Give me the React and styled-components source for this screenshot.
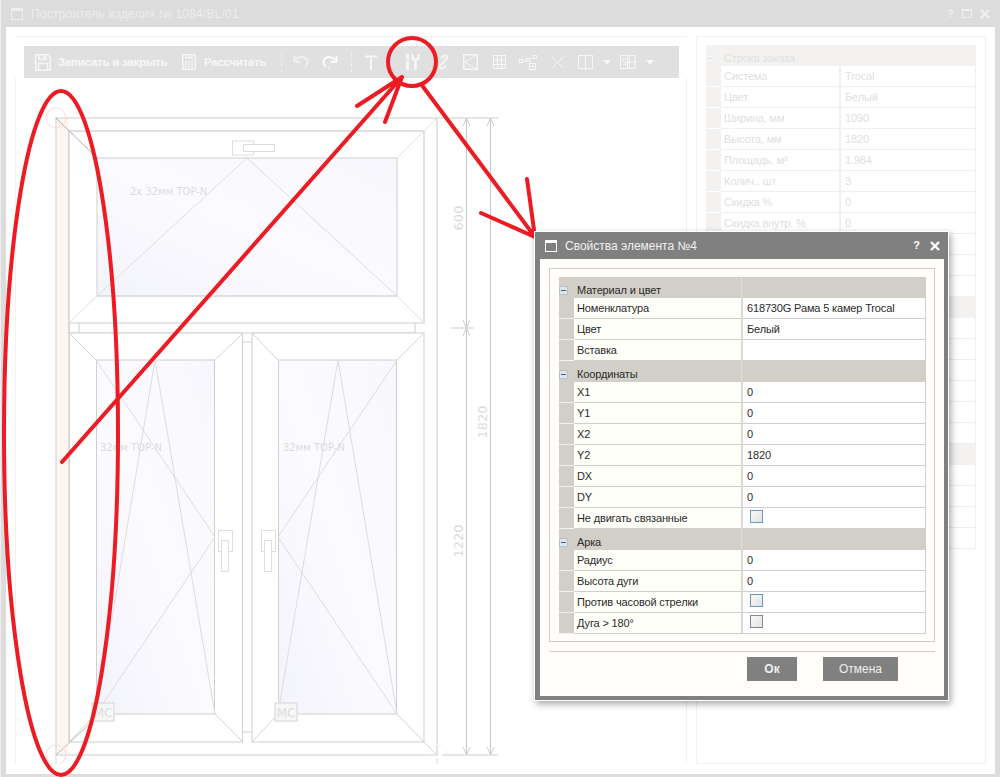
import React from "react";
import styled, { createGlobalStyle } from "styled-components";

const Global = createGlobalStyle`
  html, body { margin: 0; padding: 0; background: #fff; }
  * { box-sizing: border-box; }
  body { font-family: "Liberation Sans", Arial, sans-serif; font-size: 11px; }
`;

const Page = styled.div`
  position: relative;
  width: 1000px;
  height: 777px;
  overflow: hidden;
`;

const MainWindow = styled.div`
  width: 1000px;
  height: 777px;
  display: flex;
  flex-direction: column;
  background: #dcdcdc;
  padding: 0 5px 3px 5px;
  border-left: 1px solid #efefef;
`;

const MainTitle = styled.div`
  height: 27px;
  flex: none;
  display: flex;
  align-items: center;
  padding: 0 5px 0 5px;
  color: #ececec;
  font-size: 12px;
  letter-spacing: 0.2px;
`;

const TitleText = styled.span`
  margin-left: 8px;
  flex: 1;
`;

const WinButtons = styled.div`
  display: flex;
  align-items: center;
  gap: ${p => p.$gap}px;
`;

const Help = styled.span`
  font-weight: 700;
  font-size: 11px;
  color: ${p => p.$color};
  line-height: 1;
`;

const MainBody = styled.div`
  flex: 1;
  display: flex;
  gap: 9px;
  background: #fff;
  padding: 9px 9px 10px 9px;
`;

const DesignPane = styled.div`
  width: 672px;
  flex: none;
  display: flex;
  flex-direction: column;
  padding-top: 9px;
  border-top: 1px solid #f1f1ee;
`;

const Toolbar = styled.div`
  height: 32px;
  flex: none;
  margin: 0 8px 0 9px;
  display: flex;
  align-items: center;
  padding-left: 11px;
  background: #e0e0e0;
`;

const ToolText = styled.span`
  margin-left: ${p => p.$gap}px;
  width: ${p => p.$width}px;
  flex: none;
  color: #f7f7f7;
  font-size: 11.5px;
  font-weight: 700;
  white-space: nowrap;
  letter-spacing: -0.25px;
`;

const ToolSvg = styled.svg`
  flex: none;
  display: block;
  margin-left: ${p => p.$gap || 0}px;
  fill: none;
  stroke: #f6f6f6;
  stroke-width: 1.5;
`;

const ToolSep = styled.span`
  width: 1px;
  height: 20px;
  flex: none;
  margin-left: ${p => p.$gap}px;
  border-left: 1px dashed #efefef;
`;

const Canvas = styled.div`
  flex: 1;
  border-left: 1px solid #f1f1ee;
  border-right: 1px solid #f1f1ee;
`;

const Drawing = styled.svg`
  display: block;
  font-family: "DejaVu Sans", sans-serif;
`;

const OrderPane = styled.div`
  width: 290px;
  flex: none;
  padding: 8px 8px 0 9px;
  border: 1px solid #f1f1ee;
`;

const Grid = styled.div`
  width: ${p => p.$width}px;
  color: ${p => (p.$faded ? "#e0e0e0" : "#2b2b2b")};
  letter-spacing: -0.15px;
`;

const SectionRow = styled.div`
  height: 21px;
  display: grid;
  grid-template-columns: 15px ${p => p.$label}px 1fr;
  background: ${p => (p.$faded ? "#f3f2f0" : "#d2cfc8")};
`;

const Expander = styled.span`
  display: flex;
  align-items: center;
  justify-content: center;
  align-self: end;
  width: 9px;
  height: 9px;
  margin-bottom: 3px;
  background: ${p => (p.$faded ? "#f5f6f7" : "#dde6ec")};
  border: 1px solid ${p => (p.$faded ? "#eef0f1" : "#b4bfc6")};
  border-radius: 1px;
  &::after {
    content: "";
    width: 5px;
    height: 1px;
    background: ${p => (p.$faded ? "#dde" : "#53606a")};
  }
`;

const SectionCell = styled.span`
  padding: 6px 0 0 3px;
  line-height: 15px;
  white-space: nowrap;
  border-right: ${p => (p.$faded ? "0" : "1px solid #dedcd6")};
`;

const ItemRow = styled.div`
  height: 21px;
  display: grid;
  grid-template-columns: 15px ${p => p.$label}px 1fr;
`;

const Indent = styled.span`
  background: ${p => (p.$faded ? "#f3f2f0" : "#d2cfc8")};
  border-bottom: 1px solid ${p => (p.$faded ? "#fff" : "#f2f1ec")};
`;

const LabelCell = styled.span`
  padding-left: 3px;
  line-height: 20px;
  white-space: nowrap;
  background: ${p => (p.$faded ? "#fff" : "#fffffa")};
  border-bottom: 1px solid ${p => (p.$faded ? "#f0f0f0" : "#cfcfcf")};
  border-right: 2px solid ${p => (p.$faded ? "#f0f0f0" : "#dadada")};
`;

const ValueCell = styled.span`
  padding-left: ${p => p.$pad}px;
  line-height: 20px;
  white-space: nowrap;
  background: #fff;
  border-bottom: 1px solid ${p => (p.$faded ? "#f0f0f0" : "#cfcfcf")};
  border-right: 1px solid ${p => (p.$faded ? "#f0f0f0" : "#cfcfcf")};
`;

const Check = styled.span`
  display: block;
  width: 13px;
  height: 13px;
  margin: 2px 0 0 3px;
  border: 1px solid ${p => (p.$grey ? "#7f8a94" : "#6a97c4")};
  background: linear-gradient(135deg, #f9f9f9, #e2e2e2);
`;

const Dialog = styled.div`
  position: absolute;
  left: 534px;
  top: 231px;
  width: 415px;
  height: 470px;
  display: flex;
  flex-direction: column;
  border: 1px solid #fff;
  background: #808080;
  padding: 0 4px 4px 5px;
  box-shadow: 2px 3px 7px rgba(0, 0, 0, 0.35);
`;

const DialogTitle = styled.div`
  height: 27px;
  flex: none;
  display: flex;
  align-items: center;
  padding: 0 4px 0 5px;
  color: #f0f0f0;
  font-size: 12px;
  font-weight: 400;
`;

const DialogTitleText = styled.span`
  margin-left: 8px;
  flex: 1;
`;

const DialogBody = styled.div`
  flex: 1;
  background: #fffefa;
  padding: 9px 9px 0;
`;

const Fieldset = styled.div`
  border: 1px solid #cccccc;
  padding: 8px 8px 7px 9px;
  background: #fffefa;
`;

const Separator = styled.div`
  height: 1px;
  margin-top: 9px;
  background: #cccccc;
`;

const ButtonRow = styled.div`
  display: flex;
  justify-content: flex-end;
  gap: 26px;
  margin-top: 5px;
  padding-right: 37px;
`;

const DialogButton = styled.button`
  width: ${p => p.$width}px;
  height: 24px;
  border: 0;
  padding: 0;
  background: #808080;
  color: #efefef;
  font-family: "Liberation Sans", Arial, sans-serif;
  font-size: 12px;
  font-weight: ${p => (p.$primary ? 700 : 400)};
`;

const Marks = styled.svg`
  position: absolute;
  left: 0;
  top: 0;
  pointer-events: none;
  fill: none;
  stroke: #ed1c24;
  stroke-linecap: round;
`;

const WindowIcon = ({ color }) => (
  <svg width="12" height="12" viewBox="0 0 12 12" style={{ flex: "none" }}>
    <rect x="0.5" y="0.5" width="11" height="11" fill="none" stroke={color} />
    <rect x="0" y="0" width="12" height="3" fill={color} />
  </svg>
);

const Cross = ({ color, size }) => (
  <svg width={size} height={size} viewBox="0 0 10 10">
    <path d="M1 1 9 9M9 1 1 9" stroke={color} strokeWidth="2.4" fill="none" />
  </svg>
);

const SaveIcon = () => (
  <ToolSvg width="16" height="17" viewBox="0 0 16 17">
    <path d="M.75.75H12.5L15.25 3.5V16.25H.75Z" />
    <path d="M4 .75V5.5H11V.75M3.5 16V9.5H12.5V16M8.8 1.8V4.4" />
  </ToolSvg>
);
const CalcIcon = () => (
  <ToolSvg $gap={15} width="14" height="16" viewBox="0 0 14 16">
    <rect x=".75" y=".75" width="12.5" height="14.5" />
    <path d="M3 3.5H11" strokeWidth="2" />
    <path d="M3 7.5h2M6 7.5h2M9 7.5h2M3 10h2M6 10h2M9 10h2M3 12.5h2M6 12.5h2M9 12.5h2" strokeWidth="1.4" />
  </ToolSvg>
);
const UndoIcon = ({ gap, flip }) => (
  <ToolSvg $gap={gap} width="16" height="15" viewBox="0 0 16 15" style={flip ? { transform: "scaleX(-1)", stroke: "#fafafa" } : { opacity: 0.75 }}>
    <path d="M3 4.5C6 1.5 10.5 1 13 3.5c2.5 2.5 2 6-1 8.5" strokeWidth="2" />
    <path d="M1.500 1V6.800H7.200" strokeWidth="2" />
    <path d="M8 13.500h1.500" strokeWidth="1.500" />
  </ToolSvg>
);
const TextIcon = () => (
  <ToolSvg $gap={13} width="12" height="15" viewBox="0 0 12 15" strokeWidth="2">
    <path d="M0 1.500H12M6 1.500V15" strokeWidth="2" />
  </ToolSvg>
);
const ToolsIcon = () => (
  <ToolSvg $gap={28} width="15" height="16" viewBox="0 0 15 16">
    <path d="M2.500 0V5M2.500 7V16" strokeWidth="3" />
    <path d="M1 5.500H4" strokeWidth="1" />
    <path d="M7.500.5C7 3.500 8 5.500 10.500 6V16M13.500.5C14 3.500 13 5.500 10.500 6" strokeWidth="2.600" />
  </ToolSvg>
);
const LinkIcon = () => (
  <ToolSvg $gap={17} width="13" height="16" viewBox="0 0 13 16" strokeWidth="2">
    <path d="M6 8 9.500 5a2 2 0 0 0-3-3L4 4.500" strokeWidth="1.800" />
    <path d="M7 8 3.500 11a2 2 0 0 0 3 3L9 11.500" strokeWidth="1.800" />
  </ToolSvg>
);
const FrameIcon = () => (
  <ToolSvg $gap={13} width="15" height="16" viewBox="0 0 15 16">
    <rect x=".75" y=".75" width="13.500" height="14.500" />
    <path d="M14 1 1.500 8 14 15" strokeWidth="1" />
  </ToolSvg>
);
const GridIcon = () => (
  <ToolSvg $gap={15} width="13" height="14" viewBox="0 0 13 14" strokeWidth="1">
    <rect x=".5" y=".5" width="12" height="13" strokeWidth="1" />
    <path d="M4.500 0V14M8.500 0V14M0 5H13M0 9.500H13" strokeWidth="1" />
  </ToolSvg>
);
const NodesIcon = () => (
  <ToolSvg $gap={13} width="18" height="15" viewBox="0 0 18 15">
    <rect x=".5" y="4.500" width="3" height="3" strokeWidth="1" />
    <rect x="7.500" y="3.500" width="3" height="3" strokeWidth="1" />
    <rect x="14.500" y=".5" width="3" height="3" strokeWidth="1" />
    <rect x="10.500" y="8.500" width="6" height="6" strokeWidth="1" />
    <path d="M3.500 6H7.500M10.500 5 14.500 2.500M13.500 10V13M12 11.500H15" strokeWidth="1" />
  </ToolSvg>
);
const CloseIcon = () => (
  <ToolSvg $gap={14} width="13" height="13" viewBox="0 0 13 13">
    <path d="M.5.5 12.500 12.500M12.500.5.5 12.500" strokeWidth="1" />
  </ToolSvg>
);
const DoorIcon = () => (
  <ToolSvg $gap={14} width="15" height="16" viewBox="0 0 15 16">
    <rect x=".5" y="1.500" width="14" height="13" strokeWidth="1" />
    <path d="M7.500 0V16" strokeWidth="1" />
  </ToolSvg>
);
const SplitIcon = () => (
  <ToolSvg $gap={9} width="17" height="14" viewBox="0 0 17 14">
    <rect x=".5" y=".5" width="7" height="13" strokeWidth="1" />
    <rect x="9.500" y=".5" width="5.500" height="13" strokeWidth="1" />
    <path d="M6 4H3v3h3v3H3M7 7h9M14 5l2.500 2L14 9" strokeWidth="1" />
  </ToolSvg>
);
const Caret = ({ gap }) => (
  <ToolSvg $gap={gap} width="8" height="5" viewBox="0 0 8 5" style={{ fill: "#f8f8f8", stroke: "none" }}>
    <path d="M0 0H8L4 5Z" />
  </ToolSvg>
);

const Section = ({ label, faded, width }) => (
  <SectionRow $faded={faded} $label={width}>
    <Expander $faded={faded} />
    <SectionCell $faded={faded}>{label}</SectionCell>
    <span />
  </SectionRow>
);

const Item = ({ label, value, check, grey, faded, width, pad }) => (
  <ItemRow $label={width}>
    <Indent $faded={faded} />
    <LabelCell $faded={faded}>{label}</LabelCell>
    <ValueCell $faded={faded} $pad={pad}>
      {check ? <Check $grey={grey} /> : value}
    </ValueCell>
  </ItemRow>
);

const order = [
  ["s", "Строка заказа"],
  ["Система", "Trocal"],
  ["Цвет", "Белый"],
  ["Ширина, мм", "1090"],
  ["Высота, мм", "1820"],
  ["Площадь, м²", "1.984"],
  ["Колич., шт", "3"],
  ["Скидка %", "0"],
  ["Скидка внутр. %", "0"],
  ["", ""],
  ["", ""],
  ["", ""],
  ["s", ""],
  ["", ""],
  ["", ""],
  ["", ""],
  ["", ""],
  ["", ""],
  ["", ""],
  ["s", ""],
  ["", ""],
  ["", ""],
  ["", ""],
  ["", ""],
];

const props = [
  ["s", "Материал и цвет"],
  ["Номенклатура", "618730G Рама 5 камер Trocal"],
  ["Цвет", "Белый"],
  ["Вставка", ""],
  ["s", "Координаты"],
  ["X1", "0"],
  ["Y1", "0"],
  ["X2", "0"],
  ["Y2", "1820"],
  ["DX", "0"],
  ["DY", "0"],
  ["Не двигать связанные", "c"],
  ["s", "Арка"],
  ["Радиус", "0"],
  ["Высота дуги", "0"],
  ["Против часовой стрелки", "c"],
  ["Дуга > 180°", "g"],
];

const L = "#cfcfcf";
const F = "#dedede";
const T = "#dcdcdc";

const Line = ({ d, c = L, w = 1 }) => <path d={d} stroke={c} strokeWidth={w} fill="none" />;

const WindowDrawing = () => (
  <Drawing width="670" height="686" viewBox="16 78 670 686">
    <defs>
      <linearGradient id="glass" x1="0" y1="1" x2="1" y2="0">
        <stop offset="0" stopColor="#f3f3fb" />
        <stop offset="0.5" stopColor="#fbfbff" />
        <stop offset="1" stopColor="#f7f7fd" />
      </linearGradient>
    </defs>

    <rect x="57" y="119" width="12" height="636" fill="#fff5f3" />
    <path d="M56 118H437V755H56Z" fill="none" stroke={F} strokeWidth="1.600" />
    <path d="M69 131V742" stroke="#dcdada" strokeWidth="1.600" />

    <path d="M69 131H424V323H69Z" fill="#fff" stroke={L} strokeWidth="1.200" />
    <path d="M69 131H424" stroke={F} strokeWidth="1.600" />
    <rect x="97" y="158" width="300" height="138" fill="url(#glass)" stroke={L} />
    <path d="M97 296H397" stroke={F} strokeWidth="1.400" />
    <Line d="M247 158 97 296M247 158 397 296" c="#dddddd" />
    <Line d="M56 118 97 158" c="#aaaaaa" />
    <Line d="M437 118 397 158" c={F} />
    <Line d="M97 296 69 323M397 296 424 323" c={F} />

    <rect x="232.500" y="141" width="21" height="14" fill="#fff" stroke={F} />
    <rect x="243.500" y="144.500" width="31" height="7" fill="#fff" stroke={F} />

    <Line d="M69 323V333H79V323M79 333H415V323" />

    <rect x="69.500" y="333" width="173" height="409" fill="#fff" stroke={L} />
    <rect x="252" y="333" width="172" height="409" fill="#fff" stroke={L} />
    <Line d="M243 342H252M243 732H252" />
    <rect x="96.500" y="360" width="118" height="354" fill="url(#glass)" stroke={L} />
    <rect x="278.500" y="360" width="118" height="354" fill="url(#glass)" stroke={L} />
    <Line d="M69 333 96 360M243 333 215 360M243 742 215 714M69 742 96 714" c="#d4d4d4" />
    <Line d="M252 333 278 360M424 333 397 360M424 742 397 714M252 742 278 714" c="#d4d4d4" />
    <Line d="M437 755 424 742" c="#d4d4d4" />
    <Line d="M56 755 92 722" c="#bbbbbb" />
    <Line d="M96 360 215 537 96 714M155 360 96 714M155 360 215 714" c="#dddddd" />
    <Line d="M397 360 278 537 397 714M338 360 278 714M338 360 397 714" c="#dddddd" />

    <rect x="218.500" y="530.500" width="14" height="21" fill="#fff" stroke={F} />
    <rect x="221.500" y="540.500" width="7" height="31" fill="#fff" stroke={F} />
    <rect x="261.500" y="530.500" width="14" height="21" fill="#fff" stroke={F} />
    <rect x="264.500" y="540.500" width="7" height="31" fill="#fff" stroke={F} />

    <rect x="92" y="703" width="22" height="18" fill="#f6f6f6" stroke="#e0e0e0" strokeWidth="1.500" />
    <rect x="275" y="703" width="22" height="18" fill="#f6f6f6" stroke="#e0e0e0" strokeWidth="1.500" />
    <text x="103" y="717" textAnchor="middle" fontSize="12" fill={T}>MC</text>
    <text x="286" y="717" textAnchor="middle" fontSize="12" fill={T}>MC</text>

    <text x="130" y="195" fontSize="10" fill={T}>2x 32мм TOP-N</text>
    <text x="100" y="451" fontSize="10" fill={T}>32мм TOP-N</text>
    <text x="283" y="451" fontSize="10" fill={T}>32мм TOP-N</text>

    <circle cx="56" cy="118" r="10" fill="none" stroke="#ffd8d8" />
    <circle cx="56" cy="755" r="10" fill="none" stroke="#ffd8d8" />
    <circle cx="437" cy="755" r="10" fill="none" stroke="#f8f8f8" />
    <Line d="M56 755V765M437 758V765" c="#d8d8d8" />

    <Line d="M466.500 118V755M490.500 118V755" c="#c8c8c8" />
    <Line d="M437 118H498M442 755H498M451 328H474" c={F} w="1.400" />
    <Line d="M463 126 466.500 118 470 126M487 126 490.500 118 494 126" />
    <Line d="M463 747 466.500 755 470 747M487 747 490.500 755 494 747" />
    <Line d="M463 320 466.500 328 470 320M463 336 466.500 328 470 336" />

    <text transform="translate(463 218) rotate(-90)" textAnchor="middle" fontSize="13" fill={T}>600</text>
    <text transform="translate(463 541) rotate(-90)" textAnchor="middle" fontSize="13" fill={T}>1220</text>
    <text transform="translate(487 422) rotate(-90)" textAnchor="middle" fontSize="13" fill={T}>1820</text>
  </Drawing>
);

export default function App() {
  return (
    <Page>
      <Global />
      <MainWindow>
        <MainTitle>
          <WindowIcon color="#efefef" />
          <TitleText>Построитель изделия № 1084/BL/01</TitleText>
          <WinButtons $gap={8}>
            <Help $color="#eeeeee">?</Help>
            <svg width="10" height="9" viewBox="0 0 10 9">
              <rect x=".5" y=".5" width="9" height="8" fill="none" stroke="#eeeeee" />
              <rect x="0" y="0" width="10" height="2" fill="#eeeeee" />
            </svg>
            <Cross color="#eeeeee" size={10} />
          </WinButtons>
        </MainTitle>
        <MainBody>
          <DesignPane>
            <Toolbar>
              <SaveIcon />
              <ToolText $gap={7} $width={109}>Записать и закрыть</ToolText>
              <CalcIcon />
              <ToolText $gap={8} $width={63}>Рассчитать</ToolText>
              <ToolSep $gap={14} />
              <UndoIcon gap={11} />
              <UndoIcon gap={13} flip />
              <ToolSep $gap={13} />
              <TextIcon />
              <ToolsIcon />
              <LinkIcon />
              <FrameIcon />
              <GridIcon />
              <NodesIcon />
              <CloseIcon />
              <DoorIcon />
              <Caret gap={10} />
              <SplitIcon />
              <Caret gap={9} />
            </Toolbar>
            <Canvas>
              <WindowDrawing />
            </Canvas>
          </DesignPane>
          <OrderPane>
            <Grid $width={270} $faded>
              {order.map(([a, b], i) =>
                a === "s" ? (
                  <Section key={i} label={b} faded width={134} />
                ) : (
                  <Item key={i} label={a} value={b} faded width={120} pad={4} />
                )
              )}
            </Grid>
          </OrderPane>
        </MainBody>
      </MainWindow>

      <Marks width="1000" height="777" viewBox="0 0 1000 777">
        <ellipse cx="61" cy="433" rx="57" ry="342" strokeWidth="4" />
        <circle cx="412" cy="62" r="24" strokeWidth="4" />
        <path d="M62 462 402 77M357 106 402 77M385 122 402 77" strokeWidth="4" />
        <path d="M421 84 535 237M527 179 535 237M481 213 535 237" strokeWidth="4" />
      </Marks>

      <Dialog>
        <DialogTitle>
          <WindowIcon color="#ffffff" />
          <DialogTitleText>Свойства элемента №4</DialogTitleText>
          <WinButtons $gap={10}>
            <Help $color="#ffffff">?</Help>
            <Cross color="#ffffff" size={10} />
          </WinButtons>
        </DialogTitle>
        <DialogBody>
          <Fieldset>
            <Grid $width={367}>
              {props.map(([a, b], i) =>
                a === "s" ? (
                  <Section key={i} label={b} width={168} />
                ) : (
                  <Item
                    key={i}
                    label={a}
                    value={b}
                    check={b === "c" || b === "g"}
                    grey={b === "g"}
                    width={169}
                    pad={4}
                  />
                )
              )}
            </Grid>
          </Fieldset>
          <Separator />
          <ButtonRow>
            <DialogButton $width={50} $primary>Ок</DialogButton>
            <DialogButton $width={75}>Отмена</DialogButton>
          </ButtonRow>
        </DialogBody>
      </Dialog>
    </Page>
  );
}
